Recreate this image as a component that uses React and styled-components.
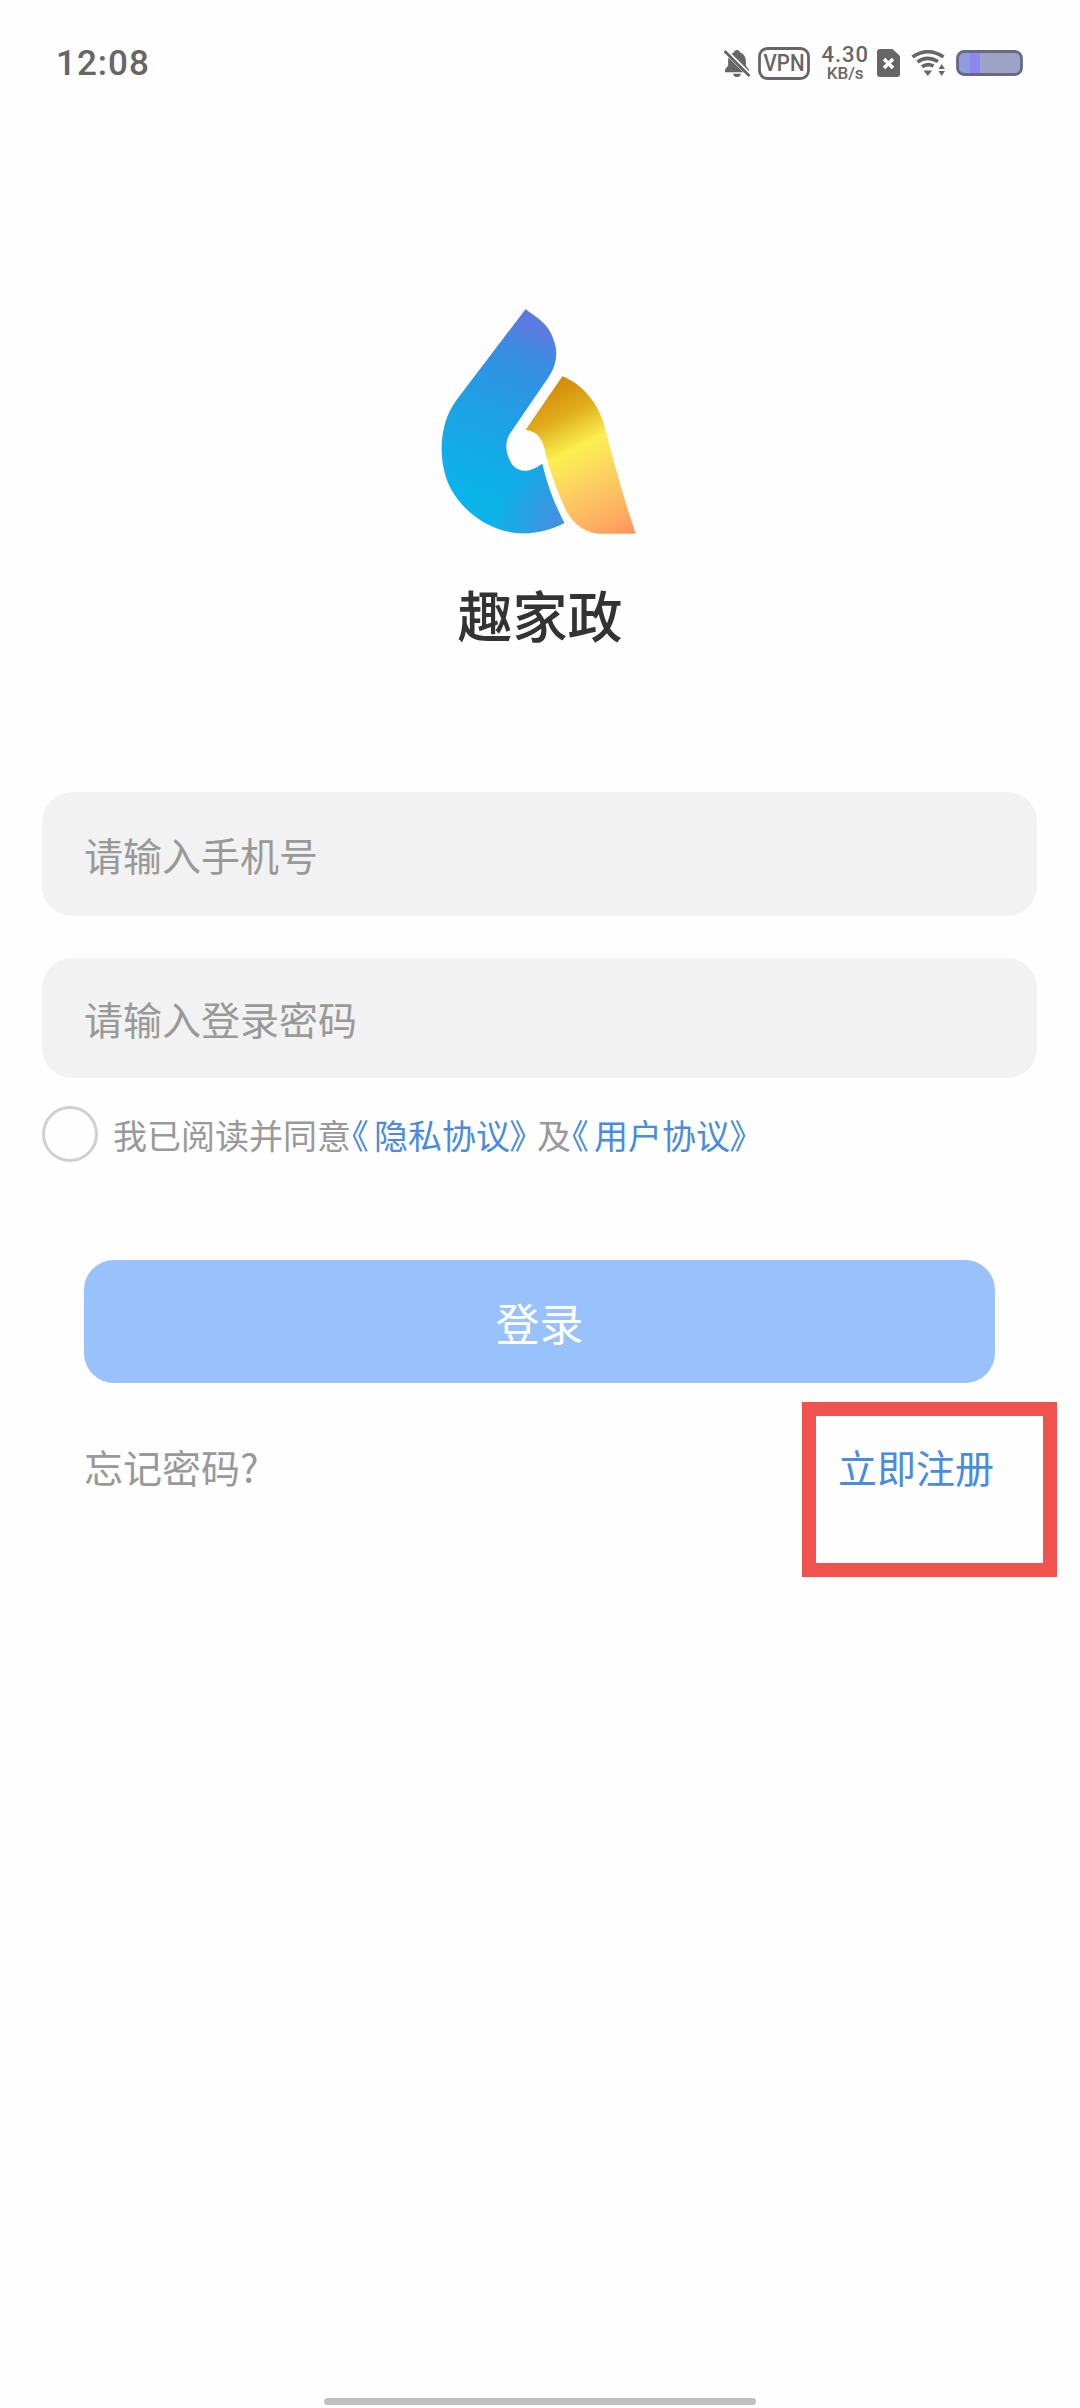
import React from 'react'
import styled, { createGlobalStyle } from 'styled-components'

const CJK = `"Noto Sans CJK SC", "Noto Sans", sans-serif`

const GlobalStyle = createGlobalStyle`
   html, body {
      margin: 0;
      padding: 0;
      background: #fff;
      font-family: ${CJK};
   }
`

const Page = styled.div`
   width: 1080px;
   height: 2408px;
   display: flex;
   flex-direction: column;
   position: relative;
   overflow: hidden;
   background: #fefefe;
`

const StatusBar = styled.div`
   height: 62px;
   padding: 32px 0 0 56px;
   display: flex;
   align-items: center;
   justify-content: space-between;
`

const Time = styled.span`
   font-family: "Roboto", sans-serif;
   font-size: 35px;
   font-weight: 500;
   letter-spacing: 1px;
   color: #666;
`

const StatusIcons = styled.div`
   display: flex;
   align-items: center;
   margin-right: 57px;
   gap: 11px;
   svg { display: block; }
`

const Speed = styled.div`
   display: flex;
   flex-direction: column;
   align-items: center;
   margin-right: -3px;
   font-family: "Roboto", sans-serif;
   font-weight: 500;
   color: #666;
   span:first-child {
      font-size: 22px;
      line-height: 21px;
      letter-spacing: 1px;
   }
   span:last-child {
      font-size: 17px;
      line-height: 17px;
   }
`

const Brand = styled.div`
   margin-top: 215px;
   display: flex;
   flex-direction: column;
   align-items: center;
   svg { display: block; margin-left: -2px; }
`

const AppName = styled.h1`
   margin: 41px 0 0;
   font-size: 55px;
   line-height: 76px;
   font-weight: 500;
   color: #333;
`

const Form = styled.div`
   margin-top: 141px;
   padding: 0 43px 0 42px;
   display: flex;
   flex-direction: column;
`

const Field = styled.div`
   height: ${p => p.$height}px;
   margin-bottom: ${p => p.$gap}px;
   padding-left: 42px;
   display: flex;
   align-items: center;
   background: #f2f2f2;
   border-radius: 30px;
   font-size: 39px;
   color: #999;
`

const Agreement = styled.div`
   display: flex;
   align-items: center;
   gap: 15px;
   margin-top: 28px;
   font-size: 34px;
   font-feature-settings: "palt";
   color: #999;
`

const Radio = styled.span`
   width: 56px;
   height: 56px;
   box-sizing: border-box;
   border: 3px solid #d0d0d0;
   border-radius: 50%;
   flex: none;
`

const Link = styled.span`
   color: #4a8cdc;
`

const OpenBracket = styled.span`
   margin-right: 6px;
`

const CloseBracket = styled.span`
   margin-right: 10px;
`

const Actions = styled.div`
   margin-top: 98px;
   padding: 0 85px 0 84px;
   display: flex;
   flex-direction: column;
`

const LoginButton = styled.div`
   height: 123px;
   display: flex;
   align-items: center;
   justify-content: center;
   background: #99c2fd;
   border-radius: 30px;
   color: #fff;
   font-size: 44px;
`

const LinksRow = styled.div`
   margin-top: 58px;
   display: flex;
   justify-content: space-between;
   font-size: 39px;
   line-height: 50px;
   color: #999;
`

const RegisterLink = styled(Link)`
   position: relative;
   margin-right: 1px;
`

// red annotation frame from the screenshot, sits on top of the link
const Highlight = styled.span`
   position: absolute;
   left: -36px;
   top: -39px;
   width: 255px;
   height: 175px;
   box-sizing: border-box;
   border: 14px solid #f0524e;
`

const HomeIndicator = styled.div`
   position: absolute;
   left: 324px;
   bottom: 3px;
   width: 432px;
   height: 7px;
   border-radius: 4px;
   background: #bfbfbf;
`

const BellOff = () => (
   <svg width="26" height="27" viewBox="2 1 26 28" style={{ marginRight: -3 }}>
      <path d="M15 1c1.800 0 3 1.100 3.200 2.600 4 1.200 6 4.800 6 9v4.500l3.300 4.400v2.500h-25v-2.500l3.300-4.400v-4.500c0-4.200 2-7.800 6-9C12 2.100 13.200 1 15 1z" fill="#666" />
      <path d="M11 25.500h8c0 2-1.800 3.500-4 3.500s-4-1.500-4-3.500z" fill="#666" />
      <path d="M2 1l27 27" stroke="#fff" strokeWidth="5" />
      <path d="M2 2l26 26" stroke="#666" strokeWidth="3" />
   </svg>
)

const Vpn = () => (
   <svg width="52" height="33" viewBox="0 0 52 33">
      <rect x="1.500" y="1.500" width="49" height="30" rx="8" fill="none" stroke="#666" strokeWidth="2.800" />
      <text x="26" y="24" textAnchor="middle" fontFamily="Roboto, sans-serif" fontSize="23" fontWeight="500" fill="#666" textLength="41" lengthAdjust="spacingAndGlyphs">VPN</text>
   </svg>
)

const SimOff = () => (
   <svg width="23" height="28" viewBox="0 0 23 28">
      <path d="M3 0h12.500l7.500 7v18a3 3 0 0 1-3 3H3a3 3 0 0 1-3-3V3a3 3 0 0 1 3-3z" fill="#666" />
      <path d="M7 10l9 9M16 10l-9 9" stroke="#fff" strokeWidth="3.400" />
   </svg>
)

const Wifi = () => (
   <svg width="34" height="26" viewBox="0 0 34 26">
      <g fill="none" stroke="#666" strokeWidth="3.600">
         <path d="M1.500 7Q17 -3.500 32.500 7" />
         <path d="M6.500 12Q16 5 27 11.500" />
         <path d="M11 16.800Q16.500 12.800 22.500 16" />
      </g>
      <path d="M12.500 20.500h8.500l-4.200 5.500z" fill="#666" />
      <path d="M27.500 19l3.200-5 3.200 5zM27.500 21h6.400l-3.200 5z" fill="#666" />
   </svg>
)

const Battery = () => (
   <svg width="67" height="26" viewBox="0 0 67 26">
      <rect x="1.500" y="1.500" width="64" height="23" rx="6.500" fill="#9ea2c4" />
      <path d="M2 8a6 6 0 0 1 6-6h16v22H8a6 6 0 0 1-6-6z" fill="#8f9bdc" />
      <rect x="14" y="2" width="10" height="22" fill="#8c86f0" />
      <rect x="1.500" y="1.500" width="64" height="23" rx="6.500" fill="none" stroke="#676a85" strokeWidth="2.800" />
   </svg>
)

const LOGO_BLUE = 'M378 58C410 85 450 100 465 160C478 205 462 240 445 265L332 430C312 458 318 500 342 530C365 552 395 545 428 522C440 575 462 640 494 700C450 722 400 735 350 730C270 722 195 670 155 600C125 545 118 470 135 405C145 370 160 345 175 325z'

const Logo = () => (
   <svg width="196" height="225" viewBox="125 58 586 675">
      <defs>
         <linearGradient id="blue" gradientUnits="userSpaceOnUse" x1="470" y1="150" x2="270" y2="620">
            <stop offset="0" stopColor="#5a7ce0" />
            <stop offset="0.15" stopColor="#3a8ce3" />
            <stop offset="0.55" stopColor="#1ea0e6" />
            <stop offset="1" stopColor="#0bb3e9" />
         </linearGradient>
         <radialGradient id="blueCorner" gradientUnits="userSpaceOnUse" cx="510" cy="730" r="230">
            <stop offset="0" stopColor="#4a8ce0" />
            <stop offset="0.3" stopColor="#4a8ce0" stopOpacity="0.8" />
            <stop offset="1" stopColor="#4a8ce0" stopOpacity="0" />
         </radialGradient>
         <linearGradient id="gold" gradientUnits="userSpaceOnUse" x1="488" y1="270" x2="714" y2="722">
            <stop offset="0" stopColor="#d68a08" />
            <stop offset="0.2" stopColor="#e0ae1c" />
            <stop offset="0.4" stopColor="#fbf050" />
            <stop offset="0.62" stopColor="#fdd062" />
            <stop offset="0.85" stopColor="#fdb060" />
            <stop offset="1" stopColor="#fe945c" />
         </linearGradient>
      </defs>
      <path d={LOGO_BLUE} fill="url(#blue)" />
      <path d={LOGO_BLUE} fill="url(#blueCorner)" />
      <path d="M488 260C540 280 590 330 612 400C635 490 670 620 708 732H610C565 732 525 712 498 660C475 610 455 560 440 500C432 450 415 425 378 420z" fill="url(#gold)" />
   </svg>
)

const App = () => {
   return (
      <Page>
         <GlobalStyle />
         <StatusBar>
            <Time>12:08</Time>
            <StatusIcons>
               <BellOff />
               <Vpn />
               <Speed><span>4.30</span><span>KB/s</span></Speed>
               <SimOff />
               <Wifi />
               <Battery />
            </StatusIcons>
         </StatusBar>
         <Brand>
            <Logo />
            <AppName>趣家政</AppName>
         </Brand>
         <Form>
            <Field $height={124} $gap={42}>请输入手机号</Field>
            <Field $height={120} $gap={0}>请输入登录密码</Field>
            <Agreement>
               <Radio />
               <span>
                  我已阅读并同意
                  <Link><OpenBracket>《</OpenBracket>隐私协议<CloseBracket>》</CloseBracket></Link>
                  及
                  <Link><OpenBracket>《</OpenBracket>用户协议》</Link>
               </span>
            </Agreement>
         </Form>
         <Actions>
            <LoginButton>登录</LoginButton>
            <LinksRow>
               <span>忘记密码?</span>
               <RegisterLink>立即注册<Highlight /></RegisterLink>
            </LinksRow>
         </Actions>
         <HomeIndicator />
      </Page>
   )
}

export default App
